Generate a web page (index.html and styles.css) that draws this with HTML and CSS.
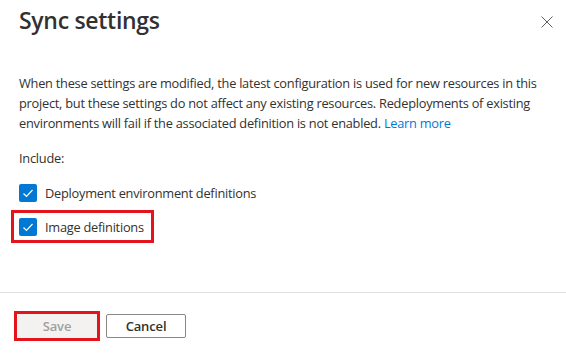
FILE: index.html
```html
<!DOCTYPE html>
<html lang="en">
<head>
  <meta charset="UTF-8" />
  <meta name="viewport" content="width=device-width, initial-scale=1.0" />
  <title>Sync settings</title>
  <link rel="stylesheet" href="styles.css">
</head>
<body>
  <div class="panel">
    <div class="panel-header">
      <h1>Sync settings</h1>
      <button class="close-btn" aria-label="Close">
        <svg width="12" height="12" viewBox="0 0 12 12">
          <path d="M0.5 0.5 L11.5 11.5 M11.5 0.5 L0.5 11.5" stroke="#605e5c" stroke-width="1" fill="none" />
        </svg>
      </button>
    </div>

    <div class="panel-body">
      <p class="intro">When these settings are modified, the latest configuration is used for new resources in this project, but these settings do not affect any existing resources. Redeployments of existing environments will fail if the associated definition is not enabled. <a href="#">Learn more</a></p>

      <p class="include-label">Include:</p>

      <div class="options">
        <label class="option">
          <span class="check">
            <svg width="18" height="18" viewBox="0 0 18 18"><path d="M4.5 9.5 L7.5 12.5 L13.5 6" stroke="#fff" stroke-width="1.2" fill="none" /></svg>
          </span>
          Deployment environment definitions
        </label>
        <label class="option highlight">
          <span class="check">
            <svg width="18" height="18" viewBox="0 0 18 18"><path d="M4.5 9.5 L7.5 12.5 L13.5 6" stroke="#fff" stroke-width="1.2" fill="none" /></svg>
          </span>
          Image definitions
        </label>
      </div>
    </div>

    <div class="panel-footer">
      <button class="btn btn-save highlight-btn" disabled>Save</button>
      <button class="btn">Cancel</button>
    </div>
  </div>
</body>
</html>
```
FILE: styles.css
```css
body {
  margin: 0;
  font-family: "Segoe UI", "Open Sans", sans-serif;
  color: #323130;
  background: #fff;
}
.panel {
  display: flex;
  flex-direction: column;
  height: 100vh;
}
.panel-header {
  display: flex;
  justify-content: space-between;
  align-items: flex-start;
  padding: 0 13px 0 19px;
}
h1 {
  margin: 4px 0 0;
  font-size: 23px;
  line-height: 32px;
  font-weight: 600;
  letter-spacing: -0.3px;
}
.close-btn {
  border: none;
  background: none;
  padding: 0;
  margin-top: 16px;
  width: 12px;
  height: 12px;
  display: flex;
  cursor: pointer;
}
.panel-body {
  flex: 1;
  padding: 0 12px 0 19px;
  font-size: 12.8px;
  line-height: 20px;
  letter-spacing: -0.25px;
}
.intro {
  margin: 37px 0 0;
}
.intro a {
  color: #0078d4;
  text-decoration: none;
}
.include-label {
  margin: 15px 0 0;
}
.options {
  display: flex;
  flex-direction: column;
  align-items: flex-start;
  margin-top: 15px;
}
.option {
  display: flex;
  align-items: center;
  gap: 8px;
  height: 20px;
}
.check {
  width: 18px;
  height: 18px;
  border-radius: 2px;
  background: #0078d4;
  display: flex;
}
.highlight {
  border: 3px solid #e3141b;
  padding: 4px 7px 3px 5px;
  margin: 7px 0 0 -8px;
}
.panel-footer {
  border-top: 1px solid #e1dfdd;
  padding: 21px 17px 20px;
  display: flex;
  gap: 9px;
}
.btn {
  width: 80px;
  height: 24px;
  padding: 0;
  border: 1px solid #8a8886;
  border-radius: 2px;
  background: #fff;
  color: #323130;
  font-family: inherit;
  font-size: 13px;
  font-weight: 600;
  letter-spacing: -0.15px;
}
.btn-save {
  background: #f3f2f1;
  border-color: #f3f2f1;
  color: #a19f9d;
}
.highlight-btn {
  outline: 3px solid #e3141b;
  border-radius: 0;
}
```
